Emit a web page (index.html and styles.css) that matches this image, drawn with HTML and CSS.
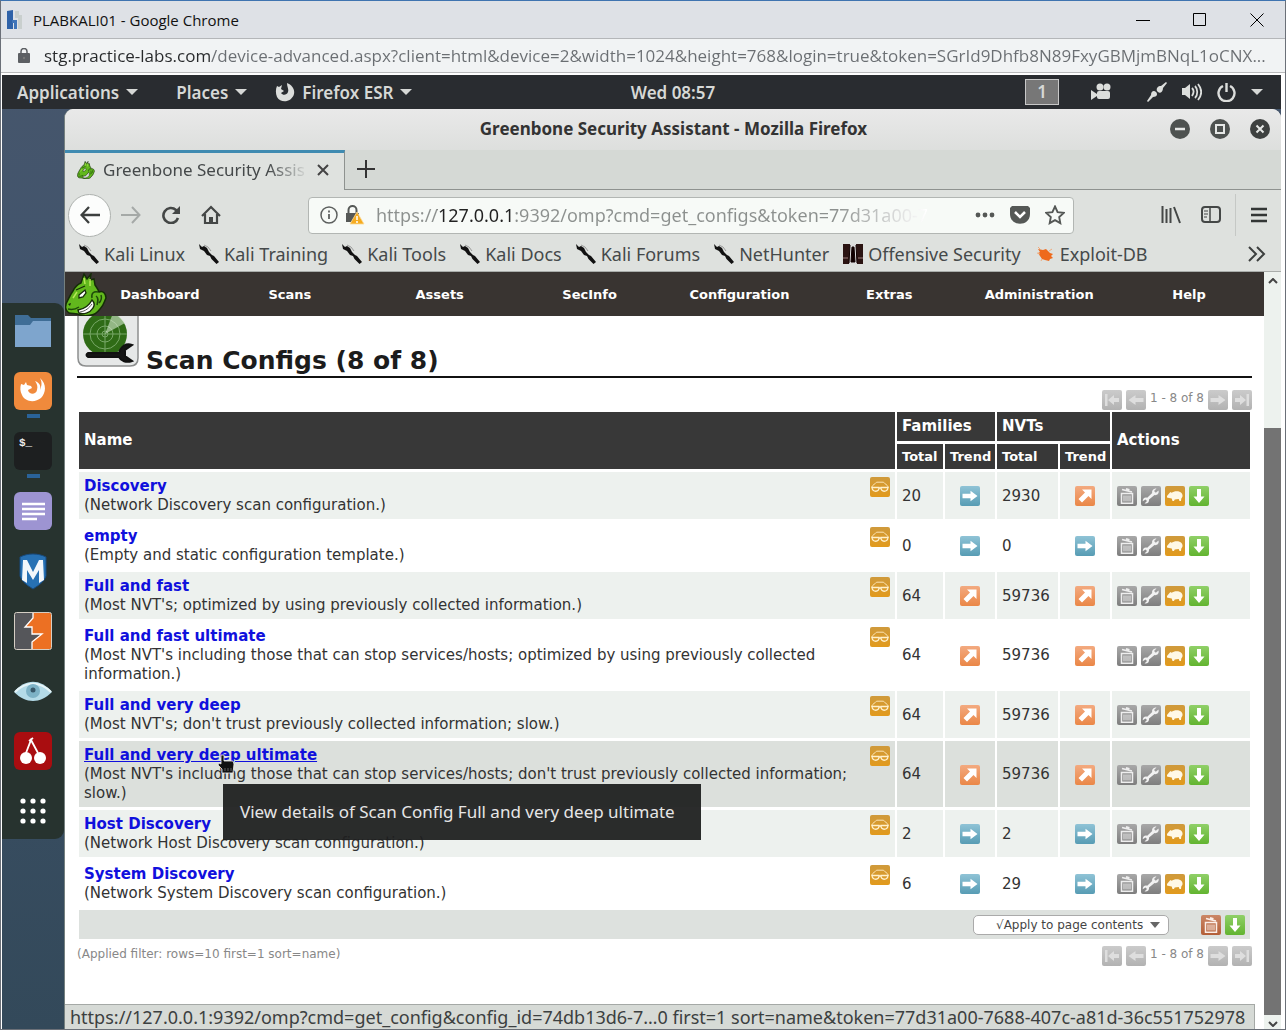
FILE: index.html
```html
<!DOCTYPE html>
<html lang="en">
<head>
<meta charset="utf-8">
<meta name="viewport" content="width=device-width, initial-scale=1">
<title>PLABKALI01 - Google Chrome</title>
<link rel="stylesheet" href="styles.css">
</head>
<body>
<svg class="sprite" aria-hidden="true">
  <defs>
    <linearGradient id="g-grey" x1="0" y1="0" x2="0" y2="1"><stop offset="0" stop-color="#a8a8a8"/><stop offset="1" stop-color="#7e7e7e"/></linearGradient>
    <linearGradient id="g-pale" x1="0" y1="0" x2="0" y2="1"><stop offset="0" stop-color="#cbcbcb"/><stop offset="1" stop-color="#b2b2b2"/></linearGradient>
    <linearGradient id="g-blue" x1="0" y1="0" x2="0" y2="1"><stop offset="0" stop-color="#8fc3d6"/><stop offset="1" stop-color="#579cb4"/></linearGradient>
    <linearGradient id="g-orange" x1="0" y1="0" x2="0" y2="1"><stop offset="0" stop-color="#f3aa80"/><stop offset="1" stop-color="#ea8747"/></linearGradient>
    <linearGradient id="g-gold" x1="0" y1="0" x2="0" y2="1"><stop offset="0" stop-color="#cf9a3c"/><stop offset="1" stop-color="#e29a1c"/></linearGradient>
    <linearGradient id="g-green" x1="0" y1="0" x2="0" y2="1"><stop offset="0" stop-color="#90d068"/><stop offset="1" stop-color="#62b430"/></linearGradient>
    <linearGradient id="g-red" x1="0" y1="0" x2="0" y2="1"><stop offset="0" stop-color="#cb8766"/><stop offset="1" stop-color="#b35f38"/></linearGradient>
  </defs>
  <symbol id="i-same" viewBox="0 0 20 20"><rect width="20" height="20" rx="2" fill="url(#g-blue)"/><path d="M2.500 7.800h8V4.800l7 5.200-7 5.200v-3h-8z" fill="#fff"/></symbol>
  <symbol id="i-more" viewBox="0 0 20 20"><rect width="20" height="20" rx="2" fill="url(#g-orange)"/><path d="M7 3.500h9.500V13l-3-3-6.500 6.500L3.500 13 10 6.500z" fill="#fff"/></symbol>
  <symbol id="i-first" viewBox="0 0 20 20"><rect width="20" height="20" rx="2" fill="url(#g-pale)"/><path d="M3 4h2.500v12H3zM6 10l6-5v3h5v4h-5v3z" fill="#dedede"/></symbol>
  <symbol id="i-prev" viewBox="0 0 20 20"><rect width="20" height="20" rx="2" fill="url(#g-pale)"/><path d="M2.500 10l7-5v3h8v4h-8v3z" fill="#dedede"/></symbol>
  <symbol id="i-next" viewBox="0 0 20 20"><rect width="20" height="20" rx="2" fill="url(#g-pale)"/><path d="M17.500 10l-7-5v3h-8v4h8v3z" fill="#dedede"/></symbol>
  <symbol id="i-last" viewBox="0 0 20 20"><rect width="20" height="20" rx="2" fill="url(#g-pale)"/><path d="M17 4h-2.500v12H17zM14 10L8 5v3H3v4h5v3z" fill="#dedede"/></symbol>
  <symbol id="i-details" viewBox="0 0 20 20"><rect width="20" height="20" rx="2" fill="url(#g-gold)"/><path d="M1.500 10.500C3 7 5 7.500 6.500 5.200h7C15 7.500 17 7 18.500 10.500" fill="none" stroke="#fbe3b4"/><path d="M2 10.500h7c.5 5-6.500 5-7 0zM11 10.500h7c-.5 5-7.500 5-7 0zM9 11h2" fill="none" stroke="#fff0cc" stroke-width="1.300"/></symbol>
  <symbol id="i-trash" viewBox="0 0 20 20"><rect width="20" height="20" rx="2" fill="url(#g-grey)"/><path d="M4.500 7.500h11v9.800h-11z" fill="none" stroke="#eee" stroke-width="1.500"/><path d="M7 9.500v6M9 9.500v6M11 9.500v6M13 9.500v6" stroke="#eee"/><path d="M5 3.500l10 2.500M9 3l3.500.8" stroke="#eee" stroke-width="1.800"/></symbol>
  <symbol id="i-trash-on" viewBox="0 0 20 20"><rect width="20" height="20" rx="2" fill="url(#g-red)"/><path d="M4.500 7.500h11v9.800h-11z" fill="none" stroke="#fbeee8" stroke-width="1.500"/><path d="M7 9.500v6M9 9.500v6M11 9.500v6M13 9.500v6" stroke="#fbeee8"/><path d="M5 3.500l10 2.500M9 3l3.500.8" stroke="#fbeee8" stroke-width="1.800"/></symbol>
  <symbol id="i-edit" viewBox="0 0 20 20"><rect width="20" height="20" rx="2" fill="url(#g-grey)"/><path d="M15.500 2.500l-2.500 2.500 1.800 1.800 2.700-2.300c.8 3-1.300 5-4 4.600L8 13.500c.5 2.500-1.500 4.500-4.500 4L6 15l-1.500-1.500-2.800 1.800c0-3 2-4.300 4.500-3.500l5-4.800c-.6-2.500 1.400-4.800 4.300-4.500z" fill="#f2f2f2"/></symbol>
  <symbol id="i-clone" viewBox="0 0 20 20"><rect width="20" height="20" rx="2" fill="url(#g-gold)"/><path d="M2 10l2.500-3 1-1 1 .8C9 4.800 14.500 4.500 16.500 7c1 1.500 1.300 2.500.8 4l-1 1.500-.3 2.500h-1.500l-.8-2-4 .5-.7 1.500H7.500l-.8-2.500L4 12l-2-.5z" fill="#fff8e6"/></symbol>
  <symbol id="i-export" viewBox="0 0 20 20"><rect width="20" height="20" rx="2" fill="url(#g-green)"/><path d="M8 3h4v7.500h3.500L10 17l-5.500-6.500H8z" fill="#fff"/></symbol>
  <symbol id="i-kali" viewBox="0 0 22 20"><path d="M1 0l3 3 2-1 3 2 2 4 3 3 2 1 5 6-2.500 2-5-5-1.500-3-3-1-3-4-4-2z" fill="#111"/><path d="M6 1l4 2 3 4" fill="none" stroke="#888" stroke-width=".8"/></symbol>
  <symbol id="i-dragon" viewBox="0 0 42 43">
    <path d="M1 31C3 27 5 22 8 18c2-4 5-7 8-8l3-9 3 5 4-5-1 6 4-1 1 6c2 3 3 4 4 7 4-2 7 2 7 6-2 4-2 7-6 11-3 4-5 6-9 6-4 1-8 1-11 0-3-2-7-1-11-2-3-2-4-5-3-8z" fill="#62b81d" stroke="#152c08" stroke-width="1.500"/>
    <path d="M11 17l9-4M14 22l6-5 1 3-3 4-4 1z" fill="#fff" stroke="#152c08" stroke-width="1.300"/>
    <path d="M13 37c6-1 11-4 14-10 2 2 3 5 1 8-3 5-10 7-14 5z" fill="#fff" stroke="#152c08" stroke-width="1.400"/><path d="M15 39c6-1 9-4 12-8" fill="none" stroke="#555"/>
    <path d="M27 25c-1-5 2-7 6-6M31 23c3 2 2 5 1 9M36 22c1 3 0 6-2 8M3 36c4 1 8 0 11-2" fill="none" stroke="#1d4a0a" stroke-width="1.500"/><path d="M3 31l3-1-1 3z" fill="#152c08"/>
    <path d="M19 5l1 6M25 6l0 7M8 25l4-6" stroke="#b6e857" stroke-width="1.500"/>
  </symbol>
</svg>

<header class="chrome-title">
  <svg width="18" height="20" viewBox="0 0 18 20"><path d="M0 1l6-1v19H0z" fill="#2f62a8"/><path d="M5 10h5v9H7v-6H5z" fill="#3f74b8"/><path d="M8 1h4v7H8zM12 5h3v14h-4V9z" fill="#c9cfce"/></svg>
  <h1>PLABKALI01 - Google Chrome</h1>
  <div class="chrome-buttons">
    <button aria-label="Minimize"><svg width="14" height="14"><path d="M0 7.500h14" stroke="#000"/></svg></button>
    <button aria-label="Maximize"><svg width="14" height="14"><path d="M.5.5h12v12H.5z" fill="none" stroke="#000"/></svg></button>
    <button aria-label="Close"><svg width="14" height="14"><path d="M.5.5l13 13M13.500.5l-13 13" stroke="#000"/></svg></button>
  </div>
</header>
<div class="chrome-address">
  <svg width="12" height="15" viewBox="0 0 12 15"><rect y="5" width="12" height="10" rx="1" fill="#5c5f63"/><path d="M3 6V3.500a3 3 0 016 0V6" fill="none" stroke="#5c5f63" stroke-width="1.500"/><circle cx="6" cy="10" r="1.200" fill="#777"/></svg>
  <input aria-label="Address" readonly value="stg.practice-labs.com/device-advanced.aspx?client=html&amp;device=2&amp;width=1024&amp;height=768&amp;login=true&amp;token=SGrId9Dhfb8N89FxyGBMjmBNqL1oCNX...">
</div>

<div class="desktop">
  <div class="panel">
    <div class="panel-menus">
      <button>Applications<i class="caret"></i></button>
      <button>Places<i class="caret"></i></button>
      <button class="app-menu"><svg width="20" height="20" viewBox="0 0 20 20"><path d="M2 4l2 1 3-2-1 4 3 2-3 2c2 3 6 2 7-1 1-3-1-5-1-9 5 2 8 6 7 11-2 8-13 10-17 3C.5 11 .5 7 2 4z" fill="#dcdedc"/></svg>Firefox ESR<i class="caret"></i></button>
    </div>
    <time>Wed 08:57</time>
    <div class="panel-tray">
      <span class="workspace">1</span>
      <svg class="cam" width="20" height="18" viewBox="0 0 20 18"><circle cx="9" cy="4" r="3.500"/><circle cx="16" cy="4" r="3.500"/><rect x="6" y="8" width="13" height="8" rx="2"/><path d="M0 7l6 4v2l-6 4z"/></svg>
      <svg width="20" height="20" viewBox="0 0 20 20"><path d="M0 19l4-6c0-4 3-5 5-3s1 5-3 5l-5 5zM10 9c-1-3 1-5 4-5l5-4 1 1-4 5c0 4-3 6-5 4z"/></svg>
      <svg width="20" height="20" viewBox="0 0 20 20"><path d="M0 6h3l5-4v15l-5-4H0z"/><path d="M10 6c2 2 2 5 0 8M13 4c3 3 3 9 0 12M16 2c4 5 4 11 0 16" fill="none" stroke="#dcdedc" stroke-width="1.800"/></svg>
      <svg width="19" height="20" viewBox="0 0 19 20"><path d="M6 4a8 8 0 107 0M9.500 1v9" fill="none" stroke="#dcdedc" stroke-width="2.400"/></svg>
      <i class="caret"></i>
    </div>
  </div>

  <div class="workarea">
    <nav class="dock" aria-label="Dock">
      <div class="dock-list">
        <a href="#" aria-label="Files"><svg viewBox="0 0 38 38"><path d="M1 3h13l3 3h20v8H1z" fill="#3f6d96"/><path d="M1 13h15l3-4h18v26H1z" fill="#7ea5cd"/></svg></a>
        <a href="#" class="running" aria-label="Firefox"><svg viewBox="0 0 38 38"><rect width="38" height="38" rx="6" fill="#f08a3c"/><path d="M7 12l3 1 2-3 1 3 4 1 1 2-4 2c1 5 8 5 9 0 1-4 0-6-2-9 5 2 6 5 5 9 2-5 2-8 0-12 7 6 6 15 1 20-6 5-16 4-19-3-2-4-2-7-1-11z" fill="#fff"/></svg></a>
        <a href="#" class="running" aria-label="Terminal"><svg viewBox="0 0 38 38"><rect width="38" height="38" rx="6" fill="#1d1f20"/><text x="5" y="14" class="prompt">$_</text></svg></a>
        <a href="#" aria-label="Notes"><svg viewBox="0 0 38 38"><rect width="38" height="38" rx="6" fill="#9d94d2"/><path d="M8 12h23M8 17h23M8 22h23M8 27h15" stroke="#fff" stroke-width="2.600"/></svg></a>
        <a href="#" aria-label="Metasploit"><svg viewBox="0 0 38 38"><path d="M6 5c8-4 18-4 26 0v19c-2 6-7 9-13 13C13 33 8 30 6 24z" fill="#2771b4" stroke="#174b80"/><path d="M8 28l1-20h4l6 12 6-12h4l1 20-5 3V18l-6 10-6-10v13z" fill="#f3f7fb"/></svg></a>
        <a href="#" aria-label="Burp Suite"><svg viewBox="0 0 38 38"><rect x=".5" y=".5" width="37" height="37" rx="2" fill="#55565a"/><path d="M19 1h18v36H18V29l10-7H18v-7h-7l8-9z" fill="#ec7023"/><path d="M19 1v5l-8 9h7v7h10l-10 8v7" fill="none" stroke="#fff" stroke-width="1.300"/><rect x=".5" y=".5" width="37" height="37" rx="2" fill="none" stroke="#d5cec4"/></svg></a>
        <a href="#" aria-label="Zenmap"><svg viewBox="0 0 38 38"><path d="M0 20c11-13 26-14 38 0-12 12-26 12-38 0z" fill="#b4dbe8"/><path d="M1 20c11-11 25-11 36 0" fill="none" stroke="#e6f4f8" stroke-width="2"/><circle cx="19" cy="19" r="7" fill="#7db2c6"/><circle cx="19" cy="18" r="2.500" fill="#37586a"/></svg></a>
        <a href="#" aria-label="CherryTree"><svg viewBox="0 0 38 38"><rect width="38" height="38" rx="6" fill="#a90d10"/><circle cx="12" cy="26" r="6" fill="#fff"/><circle cx="26" cy="26" r="6" fill="#fff"/><path d="M12 21l5-13 7 13M15 9l4-3" fill="none" stroke="#fff" stroke-width="1.800"/></svg></a>
        <a href="#" aria-label="Show applications"><svg viewBox="0 0 38 38" fill="#fff"><circle cx="9" cy="9" r="2.600"/><circle cx="19" cy="9" r="2.600"/><circle cx="29" cy="9" r="2.600"/><circle cx="9" cy="19" r="2.600"/><circle cx="19" cy="19" r="2.600"/><circle cx="29" cy="19" r="2.600"/><circle cx="9" cy="29" r="2.600"/><circle cx="19" cy="29" r="2.600"/><circle cx="29" cy="29" r="2.600"/></svg></a>
      </div>
    </nav>

    <div class="firefox">
      <div class="ff-title">
        <h2>Greenbone Security Assistant - Mozilla Firefox</h2>
        <div class="ff-buttons">
          <button aria-label="Minimize"><svg width="20" height="20"><circle cx="10" cy="10" r="10" fill="#4e5250"/><path d="M5 10h10" stroke="#e6e8e6" stroke-width="2.500"/></svg></button>
          <button aria-label="Maximize"><svg width="20" height="20"><circle cx="10" cy="10" r="10" fill="#4e5250"/><path d="M6 6h8v8H6z" fill="none" stroke="#e6e8e6" stroke-width="2"/></svg></button>
          <button aria-label="Close"><svg width="20" height="20"><circle cx="10" cy="10" r="10" fill="#3e4140"/><path d="M6.500 6.500l7 7M13.500 6.500l-7 7" stroke="#e6e8e6" stroke-width="2"/></svg></button>
        </div>
      </div>
      <div class="ff-tabs">
        <div class="tab">
          <svg width="18" height="18"><use href="#i-dragon"/></svg>
          <span class="tab-label">Greenbone Security Assis</span>
          <button aria-label="Close tab"><svg width="12" height="12"><path d="M1 1l10 10M11 1L1 11" stroke="#444" stroke-width="2"/></svg></button>
        </div>
        <div class="tab-rest"><button aria-label="New tab"><svg width="18" height="18"><path d="M9 0v18M0 9h18" stroke="#333" stroke-width="2"/></svg></button></div>
      </div>
      <div class="ff-nav">
        <div class="nav-left">
          <button class="back" aria-label="Back"><svg width="20" height="18" viewBox="0 0 20 18"><path d="M20 9H2M9 1L1.500 9 9 17" fill="none" stroke="#3c3f3e" stroke-width="2.300"/></svg></button>
          <button aria-label="Forward"><svg width="20" height="18" viewBox="0 0 20 18"><path d="M0 9h18M11 1l7.500 8L11 17" fill="none" stroke="#a5a9a7" stroke-width="2"/></svg></button>
          <button aria-label="Reload"><svg width="20" height="18" viewBox="0 0 20 18"><path d="M17 12A7.500 7.500 0 1115 4l1 2" fill="none" stroke="#444746" stroke-width="2.600"/><path d="M19 0v8h-8z" fill="#444746"/></svg></button>
          <button aria-label="Home"><svg width="20" height="20" viewBox="0 0 20 20"><path d="M1 11l9-9 9 9M4 9v9h12V9" fill="none" stroke="#444746" stroke-width="2.200"/><path d="M8 12h4v6H8z" fill="#444746"/></svg></button>
        </div>
        <div class="urlbar">
          <svg width="18" height="18"><circle cx="9" cy="9" r="8" fill="none" stroke="#5d605f" stroke-width="1.500"/><path d="M9 8v5M9 4.500v2" stroke="#5d605f" stroke-width="1.800"/></svg>
          <svg width="20" height="20" viewBox="0 0 20 20"><path d="M1 8h13v9H1z" fill="#555856"/><path d="M3.500 8V5a4 4 0 018 0v3" fill="none" stroke="#555856" stroke-width="2"/><path d="M12 7l7 12H5z" fill="#f5ab1f" stroke="#fbdc9a" stroke-width=".8"/><path d="M12 11v4M12 16v2" stroke="#fff" stroke-width="1.500"/></svg>
          <input aria-label="URL" readonly value="https://127.0.0.1:9392/omp?cmd=get_configs&amp;token=77d31a00-7688-407c-a81d-36c551752978">
          <button aria-label="Page actions"><svg width="20" height="6"><circle cx="3" cy="3" r="2.400"/><circle cx="10" cy="3" r="2.400"/><circle cx="17" cy="3" r="2.400"/></svg></button>
          <button aria-label="Pocket"><svg width="20" height="18" viewBox="0 0 20 18"><path d="M2 0h16l2 2v6c0 13-20 13-20 0V2z"/><path d="M5 6l5 5 5-5" fill="none" stroke="#fff" stroke-width="2.500"/></svg></button>
          <button aria-label="Bookmark"><svg width="20" height="20" viewBox="0 0 20 20"><path d="M10 1.500l2.600 5.600 6.100.8-4.500 4.200 1.100 6.100-5.300-3-5.300 3 1.100-6.100L1.300 7.900l6.100-.8z" fill="none" stroke="#555856" stroke-width="1.900"/></svg></button>
        </div>
        <div class="nav-right">
          <button aria-label="Library"><svg width="20" height="18" viewBox="0 0 20 18"><path d="M1.500 0v17M5.500 3v14M9.500 2v15M13 1l6 16" stroke="#444746" stroke-width="2"/></svg></button>
          <button aria-label="Sidebar"><svg width="20" height="18" viewBox="0 0 20 18"><rect x="1" y="1" width="18" height="15" rx="3" fill="none" stroke="#444746" stroke-width="2"/><path d="M9 1v15" stroke="#444746" stroke-width="1.500"/><path d="M3 5h4M3 8h4M3 11h3" stroke="#444746"/></svg></button>
          <button class="burger" aria-label="Menu"><svg width="16" height="16"><path d="M0 2h16M0 8h16M0 14h16" stroke="#333635" stroke-width="2.300"/></svg></button>
        </div>
      </div>
      <div class="ff-bookmarks">
        <a href="#"><svg width="22" height="20"><use href="#i-kali"/></svg>Kali Linux</a>
        <a href="#"><svg width="22" height="20"><use href="#i-kali"/></svg>Kali Training</a>
        <a href="#"><svg width="22" height="20"><use href="#i-kali"/></svg>Kali Tools</a>
        <a href="#"><svg width="22" height="20"><use href="#i-kali"/></svg>Kali Docs</a>
        <a href="#"><svg width="22" height="20"><use href="#i-kali"/></svg>Kali Forums</a>
        <a href="#"><svg width="22" height="20"><use href="#i-kali"/></svg>NetHunter</a>
        <a href="#"><svg width="22" height="20"><path d="M1 0h20v20H1z" fill="#2b1412"/><path d="M8 0h6l1 20H7z" fill="#ddd"/><path d="M10 3h2l1 15h-4zM8 1l-1 18M14 1l1 18" fill="#100" stroke="#100"/><path d="M1 14h5M16 14h5" stroke="#caa" stroke-width=".7"/></svg>Offensive Security</a>
        <a href="#"><svg width="22" height="20" viewBox="0 0 22 20"><path d="M4 5l5 1 3-1 4 4 3 1-2 2 2 2-3 1-1 2-4-1-3-1-2-3-2-3 2-1z" fill="#ee6a1c"/><path d="M3 9l3 1M8 15l-1 2M15 7l3-2M6 5L4 3" stroke="#f0a878"/></svg>Exploit-DB</a>
        <button class="more" aria-label="More bookmarks"><svg width="18" height="16" viewBox="0 0 18 16"><path d="M1 1l7 7-7 7M9 1l7 7-7 7" fill="none" stroke="#3c3f3e" stroke-width="2"/></svg></button>
      </div>

      <div class="viewport">
        <div class="page">
          <nav class="gsa-menu">
            <svg class="gsa-logo" width="42" height="43"><use href="#i-dragon"/></svg>
            <a href="#">Dashboard</a><a href="#">Scans</a><a href="#">Assets</a><a href="#">SecInfo</a><a href="#">Configuration</a><a href="#">Extras</a><a href="#">Administration</a><a href="#">Help</a>
          </nav>
          <main>
            <div class="heading">
              <svg width="62" height="53" viewBox="0 0 62 53"><path d="M1-2v45q0 8 8 8h44q8 0 8-8V-2z" fill="#e6e8e8" stroke="#8d8f8f" stroke-width="1.500"/><circle cx="28" cy="19" r="22" fill="#2f6b16"/><g fill="none" stroke="#79a868"><circle cx="28" cy="19" r="15"/><circle cx="28" cy="19" r="8"/><circle cx="28" cy="19" r="3"/><path d="M28-2v42M6 19h44"/></g><path d="M28 19L36-2c6 2 10 6 12 10z" fill="#d7ead0" opacity=".6"/><path d="M11 38h31c2-7 7-10 13-8l-7 5v6l7 5c-6 2-11 0-13-4H11q-3-2 0-4z" fill="#151515" stroke="#111" stroke-width="2"/></svg>
              <h3>Scan Configs (8 of 8)</h3>
            </div>
            <div class="pager">
              <svg><use href="#i-first"/></svg><svg><use href="#i-prev"/></svg><span>1 - 8 of 8</span><svg><use href="#i-next"/></svg><svg><use href="#i-last"/></svg>
            </div>
            <table>
              <colgroup><col><col class="c-ft"><col class="c-tr"><col class="c-nt"><col class="c-tr"><col class="c-act"></colgroup>
              <thead>
                <tr><th rowspan="2">Name</th><th colspan="2">Families</th><th colspan="2">NVTs</th><th rowspan="2">Actions</th></tr>
                <tr class="sub"><th>Total</th><th>Trend</th><th>Total</th><th>Trend</th></tr>
              </thead>
              <tbody>
                <tr><td><div class="name"><p><a href="#">Discovery</a><br>(Network Discovery scan configuration.)</p><svg><use href="#i-details"/></svg></div></td><td>20</td><td class="t"><svg><use href="#i-same"/></svg></td><td>2930</td><td class="t"><svg><use href="#i-more"/></svg></td><td><div class="acts"><svg><use href="#i-trash"/></svg><svg><use href="#i-edit"/></svg><svg><use href="#i-clone"/></svg><svg><use href="#i-export"/></svg></div></td></tr>
                <tr><td><div class="name"><p><a href="#">empty</a><br>(Empty and static configuration template.)</p><svg><use href="#i-details"/></svg></div></td><td>0</td><td class="t"><svg><use href="#i-same"/></svg></td><td>0</td><td class="t"><svg><use href="#i-same"/></svg></td><td><div class="acts"><svg><use href="#i-trash"/></svg><svg><use href="#i-edit"/></svg><svg><use href="#i-clone"/></svg><svg><use href="#i-export"/></svg></div></td></tr>
                <tr><td><div class="name"><p><a href="#">Full and fast</a><br>(Most NVT's; optimized by using previously collected information.)</p><svg><use href="#i-details"/></svg></div></td><td>64</td><td class="t"><svg><use href="#i-more"/></svg></td><td>59736</td><td class="t"><svg><use href="#i-more"/></svg></td><td><div class="acts"><svg><use href="#i-trash"/></svg><svg><use href="#i-edit"/></svg><svg><use href="#i-clone"/></svg><svg><use href="#i-export"/></svg></div></td></tr>
                <tr><td><div class="name"><p><a href="#">Full and fast ultimate</a><br>(Most NVT's including those that can stop services/hosts; optimized by using previously collected information.)</p><svg><use href="#i-details"/></svg></div></td><td>64</td><td class="t"><svg><use href="#i-more"/></svg></td><td>59736</td><td class="t"><svg><use href="#i-more"/></svg></td><td><div class="acts"><svg><use href="#i-trash"/></svg><svg><use href="#i-edit"/></svg><svg><use href="#i-clone"/></svg><svg><use href="#i-export"/></svg></div></td></tr>
                <tr><td><div class="name"><p><a href="#">Full and very deep</a><br>(Most NVT's; don't trust previously collected information; slow.)</p><svg><use href="#i-details"/></svg></div></td><td>64</td><td class="t"><svg><use href="#i-more"/></svg></td><td>59736</td><td class="t"><svg><use href="#i-more"/></svg></td><td><div class="acts"><svg><use href="#i-trash"/></svg><svg><use href="#i-edit"/></svg><svg><use href="#i-clone"/></svg><svg><use href="#i-export"/></svg></div></td></tr>
                <tr class="hover"><td><div class="name"><p><a href="#">Full and very deep ultimate</a><br>(Most NVT's including those that can stop services/hosts; don't trust previously collected information; slow.)</p><svg><use href="#i-details"/></svg>
                  <svg class="cursor" viewBox="0 0 18 20"><path d="M4 1h3v6h9l1 3-1 9H5v-4l-4-4 1-2 2 1z" fill="#111" stroke="#eee" stroke-width=".8"/><path d="M8 14v3M11 14v3M14 14v3" stroke="#777" stroke-width=".8"/></svg>
                  <div class="tooltip" role="tooltip">View details of Scan Config Full and very deep ultimate</div></div></td><td>64</td><td class="t"><svg><use href="#i-more"/></svg></td><td>59736</td><td class="t"><svg><use href="#i-more"/></svg></td><td><div class="acts"><svg><use href="#i-trash"/></svg><svg><use href="#i-edit"/></svg><svg><use href="#i-clone"/></svg><svg><use href="#i-export"/></svg></div></td></tr>
                <tr><td><div class="name"><p><a href="#">Host Discovery</a><br>(Network Host Discovery scan configuration.)</p><svg><use href="#i-details"/></svg></div></td><td>2</td><td class="t"><svg><use href="#i-same"/></svg></td><td>2</td><td class="t"><svg><use href="#i-same"/></svg></td><td><div class="acts"><svg><use href="#i-trash"/></svg><svg><use href="#i-edit"/></svg><svg><use href="#i-clone"/></svg><svg><use href="#i-export"/></svg></div></td></tr>
                <tr><td><div class="name"><p><a href="#">System Discovery</a><br>(Network System Discovery scan configuration.)</p><svg><use href="#i-details"/></svg></div></td><td>6</td><td class="t"><svg><use href="#i-same"/></svg></td><td>29</td><td class="t"><svg><use href="#i-same"/></svg></td><td><div class="acts"><svg><use href="#i-trash"/></svg><svg><use href="#i-edit"/></svg><svg><use href="#i-clone"/></svg><svg><use href="#i-export"/></svg></div></td></tr>
              </tbody>
              <tfoot><tr><td colspan="6"><div class="bulk">
                <span class="select"><select aria-label="Apply to"><option>√Apply to page contents</option></select><i class="caret"></i></span>
                <div class="acts"><svg><use href="#i-trash-on"/></svg><svg><use href="#i-export"/></svg></div>
              </div></td></tr></tfoot>
            </table>
            <div class="after">
              <span>(Applied filter: rows=10 first=1 sort=name)</span>
              <div class="pager">
                <svg><use href="#i-first"/></svg><svg><use href="#i-prev"/></svg><span>1 - 8 of 8</span><svg><use href="#i-next"/></svg><svg><use href="#i-last"/></svg>
              </div>
            </div>
          </main>
          <div class="status">https://127.0.0.1:9392/omp?cmd=get_config&amp;config_id=74db13d6-7…0 first=1 sort=name&amp;token=77d31a00-7688-407c-a81d-36c551752978</div>
        </div>
        <div class="scrollbar">
          <svg width="10" height="6"><path d="M1 5l4-4 4 4" fill="none" stroke="#444" stroke-width="2"/></svg>
          <div class="track"><div class="thumb"></div></div>
          <svg width="10" height="6"><path d="M1 1l4 4 4-4" fill="none" stroke="#444" stroke-width="2"/></svg>
        </div>
      </div>
    </div>
  </div>
</div>
</body>
</html>
```
FILE: styles.css
```css
* { box-sizing: border-box; }

body {
  margin: 0;
  height: 100vh;
  display: flex;
  flex-direction: column;
  overflow: hidden;
  background: #fff;
  border: 1px solid #6b7078;
  border-top-color: #3f74b0;
  font-family: "Noto Sans", "Open Sans", sans-serif;
}

h1, h2, h3, p { margin: 0; }
svg { display: block; flex: none; }
.sprite { position: absolute; width: 0; height: 0; }
button { border: 0; padding: 0; background: none; font: inherit; color: inherit; display: flex; align-items: center; justify-content: center; }
input { border: 0; outline: 0; padding: 0; min-width: 0; font: inherit; color: transparent; background-clip: text; }
a { color: inherit; text-decoration: none; }
.caret { border: 6px solid transparent; border-top-color: currentColor; border-bottom: 0; }

/* Outer browser window */
.chrome-title {
  height: 38px;
  flex: none;
  display: flex;
  align-items: center;
  gap: 8px;
  padding-left: 6px;
  background: #dee1e6;
  border-bottom: 1px solid #b4b6b9;
}
.chrome-title h1 { flex: 1; font: 400 15px/20px "Open Sans", sans-serif; color: #111; }
.chrome-buttons { display: flex; padding-right: 21px; gap: 43px; }
.chrome-address {
  height: 34px;
  flex: none;
  display: flex;
  align-items: center;
  gap: 14px;
  padding: 0 16px 0 17px;
  background: #f1f3f4;
  border-bottom: 1px solid #b9babb;
}
.chrome-address input {
  flex: 1;
  height: 26px;
  font: 400 17px/26px "Open Sans", sans-serif;
  background-image: linear-gradient(90deg, #26282a 167px, #6a6e72 167px);
}

/* Remote desktop */
.desktop {
  flex: 1;
  min-height: 0;
  margin: 2px 4px 0 1px;
  display: flex;
  flex-direction: column;
  background: linear-gradient(#46566c, #41546c 25%, #33495a);
}
.panel {
  height: 34px;
  flex: none;
  display: grid;
  grid-template-columns: 1fr auto 1fr;
  align-items: center;
  padding: 0 18px 0 15px;
  background: #292c30;
  color: #d6d8d6;
  fill: #dcdedc;
  font-size: 17px;
  font-weight: 600;
}
.panel time { padding-left: 66px; }
.panel-menus { display: flex; gap: 38px; }
.panel-menus button { gap: 7px; }
.panel-menus .app-menu { margin-left: -10px; }
.panel-tray { display: flex; justify-content: flex-end; align-items: center; gap: 15px; }
.workspace { width: 34px; height: 26px; margin-right: 17px; border: 1px solid #c8c8c8; background: #777; text-align: center; line-height: 24px; }
.cam { margin-right: 21px; }

.workarea { flex: 1; min-height: 0; display: flex; }
.dock { width: 62px; flex: none; display: flex; flex-direction: column; justify-content: center; padding-top: 4px; }
.dock-list {
  display: flex;
  flex-direction: column;
  align-items: center;
  gap: 22px;
  padding: 9px 0;
  background: #27332f;
  border-radius: 0 9px 9px 0;
}
.dock-list a { position: relative; width: 38px; height: 38px; }
.dock-list a.running::after { content: ""; position: absolute; left: 13px; bottom: -8px; width: 13px; height: 4px; background: #2a6399; }
.prompt { font: 700 11px "Liberation Mono", monospace; fill: #eee; }

/* Firefox window */
.firefox {
  flex: 1;
  min-width: 0;
  display: flex;
  flex-direction: column;
  border-left: 1px solid #75807f;
  border-radius: 9px 9px 0 0;
  overflow: hidden;
  background: #dee1de;
  color: #45494a;
  font-size: 18px;
}
.ff-title { height: 41px; flex: none; display: flex; align-items: center; padding: 0 11px 2px 112px; background: linear-gradient(#e9e9e9, #dddfdd); color: #333; }
.ff-title h2 { flex: 1; text-align: center; font-size: 17px; font-weight: 700; }
.ff-buttons { display: flex; gap: 20px; }
.ff-tabs { height: 40px; flex: none; display: flex; }
.tab { width: 280px; display: flex; align-items: center; gap: 8px; padding: 0 15px 4px 12px; border-top: 3px solid #3f8bb1; border-right: 1px solid #8e928f; background: #dfe2df; }
.tab-label { flex: 1; min-width: 0; overflow: hidden; white-space: nowrap; font-size: 17px; mask-image: linear-gradient(90deg, #000 80%, transparent); }
.tab-rest { flex: 1; display: flex; align-items: center; padding: 0 0 2px 12px; background: #d5d9d5; border-bottom: 1px solid #8e928f; }
.ff-nav { height: 50px; flex: none; display: flex; align-items: center; gap: 87px; padding-left: 3px; }
.nav-left { display: flex; align-items: center; gap: 20px; }
.back { width: 43px; height: 43px; margin-right: -10px; border: 1px solid #aeb2af; border-radius: 50%; background: #fcfdfc; }
.urlbar {
  flex: 1;
  min-width: 0;
  height: 37px;
  display: flex;
  align-items: center;
  gap: 15px;
  padding: 0 8px 0 11px;
  border: 1px solid #b2b6b3;
  border-radius: 4px;
  background: #f7faf7;
  fill: #555856;
}
.urlbar input { flex: 1; height: 28px; margin: 0 32px 0 -4px; background-image: linear-gradient(90deg, #8c908e 61px, #222 61px 137px, #8c908e 137px 460px, transparent 550px); }
.urlbar svg + svg { margin-left: -8px; }
.nav-right { display: flex; align-items: center; gap: 20px; }
.burger { height: 42px; width: 46px; margin-left: -6px; border-left: 1px solid #c5c8c5; }
.ff-bookmarks { height: 32px; flex: none; display: flex; align-items: center; padding: 0 15px 4px 13px; gap: 13px; border-bottom: 1px solid #a9adaa; white-space: nowrap; }
.ff-bookmarks a { display: flex; align-items: center; gap: 4px; }
.more { margin-left: auto; }

/* Greenbone page */
.viewport { flex: 1; min-height: 0; display: flex; }
.page { position: relative; flex: 1; min-width: 0; overflow: hidden; background: #fff; color: #333; font: 15px/19px "DejaVu Sans", sans-serif; }
.gsa-menu { position: relative; height: 44px; display: flex; align-items: center; background: #393431; color: #fff; font-weight: 700; font-size: 13px; }
.gsa-menu a { flex: none; width: 12.5%; text-align: center; }
.gsa-menu a:first-of-type { padding-left: 40px; }
.gsa-logo { position: absolute; left: 0; top: 1px; }
main { padding: 0 12px; }
.heading { display: flex; align-items: flex-end; gap: 7px; height: 62px; padding-bottom: 8px; border-bottom: 2px solid #111; }
.heading h3 { font-size: 25px; line-height: 32px; color: #1c1c1c; margin-bottom: -9px; }
.pager { display: flex; justify-content: flex-end; align-items: center; gap: 4px; color: #888; font-size: 12px; }
.pager span { margin-bottom: 2px; }
.pager svg, .acts svg, .name svg, .t svg { width: 20px; height: 20px; }
main > .pager { height: 19px; margin-top: 12px; }
table { width: 100%; table-layout: fixed; border-collapse: separate; border-spacing: 2px 3px; }
.c-ft { width: 46px; }
.c-tr { width: 50px; }
.c-nt { width: 61px; }
.c-act { width: 138px; }
th { height: 29px; padding: 0 5px; background: #383838; color: #fff; text-align: left; }
.sub th { height: 25px; font-size: 13px; }
td { padding: 5px 5px 4px; background: #fff; }
tbody tr:nth-child(odd) td { background: #edf1ee; }
tbody tr.hover td { background: #dce0dc; }
.hover a { text-decoration: underline; }
.name { position: relative; display: flex; justify-content: space-between; gap: 18px; }
.name a { color: #1010dd; font-weight: 700; }
.t svg { margin: 0 auto; }
.acts { display: flex; gap: 4px; }
tfoot td { height: 29px; padding: 0 5px; background: #dde1de; }
.bulk { display: flex; justify-content: flex-end; align-items: center; gap: 32px; }
.select { position: relative; width: 196px; height: 20px; }
.select select { appearance: none; width: 100%; height: 20px; padding: 0 18px 0 22px; border: 1px solid #aaa; border-radius: 5px; background: #fff; color: #444; font: 12px/17px "DejaVu Sans", sans-serif; }
.select .caret { position: absolute; right: 9px; top: 7px; color: #666; border-width: 6px 5px 0; }
.after { display: flex; justify-content: space-between; color: #888; font-size: 12px; margin-top: 3px; }

.cursor { position: absolute; left: 132px; top: 8px; }
.tooltip { position: absolute; z-index: 2; left: 139px; top: 38px; height: 56px; padding: 0 26px 0 17px; background: rgba(30, 31, 31, .94); color: #e6e6e6; font: 17px/56px "Noto Sans", sans-serif; white-space: nowrap; }
.status { position: absolute; left: 0; bottom: 0; padding: 0 9px 0 5px; border: 1px solid #a5a9a6; border-left: 0; border-bottom: 0; background: #d6dad6; color: #3c4040; font: 18px/24px "Noto Sans", sans-serif; white-space: nowrap; }

.scrollbar { width: 17px; flex: none; display: flex; flex-direction: column; align-items: center; gap: 6px; padding: 6px 0 2px; background: #edf2ee; }
.track { flex: 1; align-self: stretch; display: flex; align-items: flex-end; }
.thumb { width: 100%; height: 81%; background: #737373; }
```
